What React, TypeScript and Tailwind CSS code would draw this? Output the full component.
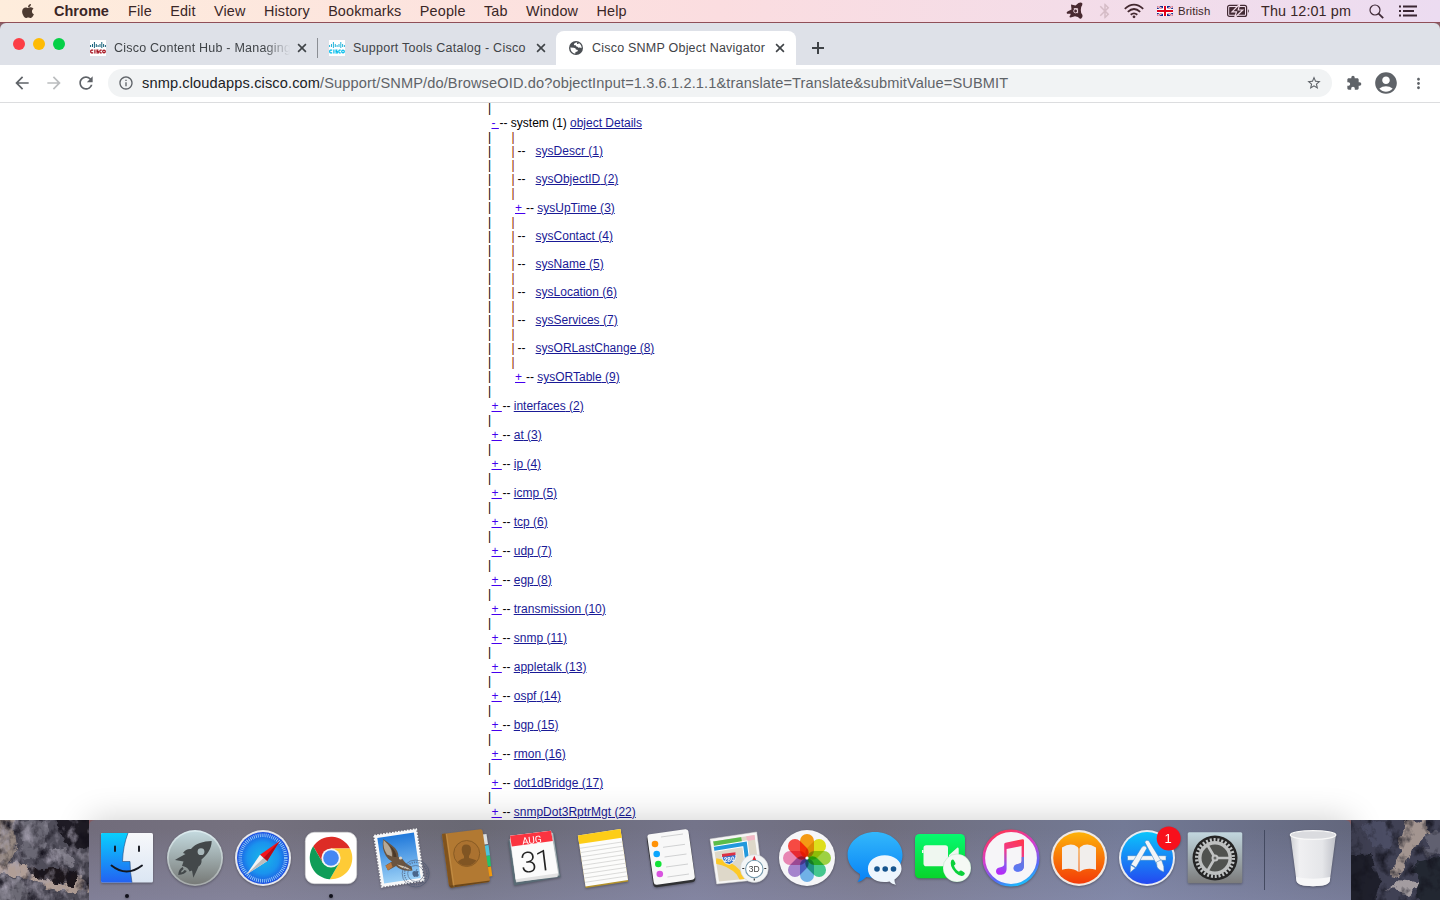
import React from "react";
import { FaApple } from "react-icons/fa";
import {
  MdAccountCircle,
  MdArrowBack,
  MdArrowForward,
  MdBluetooth,
  MdExtension,
  MdInfoOutline,
  MdMoreVert,
  MdRefresh,
  MdStarBorder,
} from "react-icons/md";

/* ---------- Menu bar ---------- */

function AvastIcon() {
  return (
    <svg width="18" height="18" viewBox="0 0 18 18" className="shrink-0">
      <path
        d="M5 2.5 L9.5 3.5 L12.5 1 Q15 0 16.3 1.2 Q16.8 3.5 15.2 5 L14.8 8 L15.2 11 L16.5 13 Q17 15.5 15 16.8 Q13 17 12 15 L9 14.3 L4.5 15.6 Q2.5 15 4.5 13 L4.5 11.7 L1 11.8 Q0 10.5 1.5 9.5 L5.5 7.5 Z"
        fill="#482930"
      />
      <circle cx="9.6" cy="9" r="1.9" fill="none" stroke="#f3dbe5" strokeWidth=".9" />
      <path d="M7.8 6.6 H11.6 V11.2" fill="none" stroke="#f3dbe5" strokeWidth=".9" />
    </svg>
  );
}

function WifiIcon() {
  return (
    <svg width="20" height="16" viewBox="0 0 20 16" className="shrink-0" fill="none" stroke="#43282f" strokeWidth="1.8">
      <path d="M0.8 5.8 Q10 -2.6 19.2 5.8" />
      <path d="M3.8 8.9 Q10 3.2 16.2 8.9" />
      <path d="M6.7 11.8 Q10 8.9 13.3 11.8" />
      <circle cx="10" cy="13.8" r="1.4" fill="#43282f" stroke="none" />
    </svg>
  );
}

function Flag() {
  return (
    <svg width="16" height="10" viewBox="0 0 16 10" className="shrink-0">
      <rect width="16" height="10" fill="#1b2a8c" />
      <path d="M0 0 L16 10 M16 0 L0 10" stroke="#fff" strokeWidth="2" />
      <path d="M0 0 L16 10 M16 0 L0 10" stroke="#d8203a" strokeWidth=".7" />
      <path d="M8 0 V10 M0 5 H16" stroke="#fff" strokeWidth="4" />
      <path d="M8 0 V10 M0 5 H16" stroke="#e0001b" strokeWidth="2" />
    </svg>
  );
}

function Battery() {
  return (
    <svg width="23" height="14" viewBox="0 0 23 14" className="shrink-0">
      <rect x="0.6" y="1.4" width="19" height="11" rx="2" fill="none" stroke="#432a34" strokeWidth="1.2" />
      <rect x="2.2" y="3" width="15.8" height="7.8" rx=".6" fill="#432a34" />
      <path d="M21 5 Q22.8 7 21 9 Z" fill="#432a34" />
      <path d="M12.8 0 L5 7.8 H9.5 L7.5 14 L15.8 6 H11.2 Z" fill="#432a34" stroke="#f1dae7" strokeWidth="1.2" />
    </svg>
  );
}

const menus = ["File", "Edit", "View", "History", "Bookmarks", "People", "Tab", "Window", "Help"];

function MenuBar() {
  return (
    <header className="flex h-[23px] shrink-0 items-center border-b border-[#8f4f58] bg-linear-to-r from-[#feeddc] via-[#fbdde0] to-[#ecdcf1] text-[14.4px] text-[#3a2626]">
      <FaApple className="ml-[20px] size-[16px] text-[#4c3a31]" />
      <span className="ml-[18px] w-[74px] pt-px text-[14.5px] font-bold tracking-[0.02px]">Chrome</span>
      <nav className="flex gap-[18.4px] pt-px tracking-[0.15px]">
        {menus.map((m) => (
          <span key={m}>{m}</span>
        ))}
      </nav>
      <div className="ml-auto flex items-center">
        <AvastIcon />
        <MdBluetooth className="ml-[12px] size-[18px] text-[#d5bcc6]" />
        <span className="ml-[10.5px] flex"><WifiIcon /></span>
        <span className="ml-[13px] flex"><Flag /></span>
        <span className="ml-[5px] w-[49px] pt-px text-[11.4px] tracking-[0.1px]">British</span>
        <Battery />
        <span className="ml-[11px] w-[108px] pt-px text-[14.4px] tracking-[0.1px] whitespace-nowrap">Thu 12:01 pm</span>
        <svg width="15" height="15" viewBox="0 0 15 15" fill="none" stroke="#3f2a36">
          <circle cx="6" cy="6" r="5" strokeWidth="1.2" />
          <path d="M9.6 9.6 L14.2 14.2" strokeWidth="1.8" />
        </svg>
        <svg width="18" height="12" viewBox="0 0 18 12" className="mr-[23px] ml-[15px]" stroke="#3a2633" strokeWidth="1.8">
          <path d="M0 1.5 H2 M4 1.5 H18 M0 6 H2 M4 6 H15 M0 10.5 H2 M4 10.5 H18" />
        </svg>
      </div>
    </header>
  );
}

/* ---------- Browser chrome ---------- */

function CiscoIcon({ bars, word }: { bars: string; word: string }) {
  return (
    <svg width="16" height="16" viewBox="0 0 16 16" className="shrink-0">
      <rect width="16" height="16" fill="#fff" />
      <path d="M.6 5 V7 M2.5 4 V7 M4.4 2 V8 M6.3 4 V7 M8.1 5 V7 M10 4 V7 M11.8 2 V8 M13.6 4 V7 M15.4 5 V7" stroke={bars} strokeWidth="1" />
      <g fill="none" stroke={word} strokeWidth="1.2">
        <path d="M3.2 10.2 H1.5 Q.7 10.2 .7 11.5 Q.7 12.8 1.5 12.8 H3.2" />
        <path d="M4.9 9.6 V13.4" />
        <path d="M8.4 10.1 H7 V11.5 H8.3 V12.8 H6.4" />
        <path d="M11.7 10.2 H10.5 Q9.8 10.2 9.8 11.5 Q9.8 12.8 10.5 12.8 H11.7" />
        <circle cx="14" cy="11.5" r="1.3" />
      </g>
    </svg>
  );
}

function GlobeIcon() {
  return (
    <svg width="14" height="14" viewBox="0 0 14 14" className="shrink-0">
      <circle cx="7" cy="7" r="7" fill="#4b4f54" />
      <path d="M8.2 1.3 Q5 1.7 4.8 3.4 Q5 4.4 6.7 4.3 Q7.2 5.8 8.5 5.8 L9.4 6.7 Q11.2 6.3 12.6 7.2 Q12.7 3.5 9.8 1.9 L9.4 3 H8 Z" fill="#fff" />
      <path d="M1.3 6.6 L4.8 6.8 Q7 7 6.9 8.6 L8.9 9 L8.4 10.6 L6.5 11 L6.2 12.7 Q1.7 12 1.3 6.6 Z" fill="#fff" />
    </svg>
  );
}

function CloseIcon() {
  return (
    <svg width="12" height="12" viewBox="0 0 12 12" className="shrink-0" stroke="#3f4347" strokeWidth="1.6">
      <path d="M2.1 2.1 L9.9 9.9 M9.9 2.1 L2.1 9.9" />
    </svg>
  );
}

function TabStrip() {
  return (
    <div className="flex h-[42px] shrink-0 items-end rounded-t-md bg-[#dee1e8] text-[12.5px] tracking-[0.22px] text-[#3f4347]">
      <div className="flex h-[42px] w-[77px] items-center gap-2 pl-[13px]">
        <i className="size-3 rounded-full bg-[#fc3e46]" />
        <i className="size-3 rounded-full bg-[#febb04]" />
        <i className="size-3 rounded-full bg-[#05d047]" />
      </div>
      <div className="flex h-[34px] w-[240px] items-center pl-[13px]">
        <CiscoIcon bars="#15617a" word="#a30c18" />
        <span className="ml-2 w-[176px] overflow-hidden mask-r-from-85% mask-r-to-100% whitespace-nowrap">Cisco Content Hub - Managing</span>
        <span className="ml-[6px] flex"><CloseIcon /></span>
      </div>
      <div className="flex h-[34px] w-[239px] items-center">
        <i className="h-5 w-px bg-[#8b8e94]" />
        <span className="ml-[11px] flex"><CiscoIcon bars="#26b5da" word="#00bceb" /></span>
        <span className="ml-2 w-[182px] tracking-[0.26px] whitespace-nowrap">Support Tools Catalog - Cisco</span>
        <CloseIcon />
      </div>
      <div className="flex h-[34px] w-[240px] items-center rounded-t-lg bg-white pl-[13px]">
        <GlobeIcon />
        <span className="ml-[9px] w-[182px] whitespace-nowrap">Cisco SNMP Object Navigator</span>
        <CloseIcon />
      </div>
      <div className="flex h-[34px] items-center pl-4">
        <svg width="12" height="12" viewBox="0 0 12 12" stroke="#3f4347" strokeWidth="2">
          <path d="M6 0 V12 M0 6 H12" />
        </svg>
      </div>
    </div>
  );
}

function Toolbar() {
  return (
    <div className="flex h-[38px] shrink-0 items-center border-b border-[#dcdddf] bg-white pb-px text-[#5f6368]">
      <MdArrowBack className="ml-[12px] size-5" />
      <MdArrowForward className="ml-[12px] size-5 text-[#bbbdbf]" />
      <MdRefresh className="ml-[12px] size-5" />
      <div className="ml-3 flex h-7 w-[1224px] items-center rounded-full bg-[#f1f3f4] pl-[10px]">
        <MdInfoOutline className="size-4" />
        <span className="ml-[8px] pt-[2px] text-[14.6px] tracking-[0.12px] whitespace-nowrap">
          <span className="text-[#202124]">snmp.cloudapps.cisco.com</span>
          /Support/SNMP/do/BrowseOID.do?objectInput=1.3.6.1.2.1.1&amp;translate=Translate&amp;submitValue=SUBMIT
        </span>
        <MdStarBorder className="mr-[10px] ml-auto size-4" />
      </div>
      <MdExtension className="ml-[14px] size-4" />
      <MdAccountCircle className="ml-[11px] size-[26px]" />
      <MdMoreVert className="ml-[11px] size-[17px]" />
    </div>
  );
}

/* ---------- OID tree ---------- */

type Child = { name: string; id: number; open?: boolean };

const systemChildren: Child[] = [
  { name: "sysDescr", id: 1 },
  { name: "sysObjectID", id: 2 },
  { name: "sysUpTime", id: 3, open: true },
  { name: "sysContact", id: 4 },
  { name: "sysName", id: 5 },
  { name: "sysLocation", id: 6 },
  { name: "sysServices", id: 7 },
  { name: "sysORLastChange", id: 8 },
  { name: "sysORTable", id: 9, open: true },
];

const groups: [string, number][] = [
  ["interfaces", 2],
  ["at", 3],
  ["ip", 4],
  ["icmp", 5],
  ["tcp", 6],
  ["udp", 7],
  ["egp", 8],
  ["transmission", 10],
  ["snmp", 11],
  ["appletalk", 13],
  ["ospf", 14],
  ["bgp", 15],
  ["rmon", 16],
  ["dot1dBridge", 17],
  ["snmpDot3RptrMgt", 22],
];

function Bar({ inner = false }: { inner?: boolean }) {
  return <span className={inner ? "ml-[20.6px] w-[3px] text-[#8f2000]" : "w-[3px] text-black"}>|</span>;
}

function Sign({ children }: { children: string }) {
  return <a className="w-[10.9px] whitespace-pre text-[#4400ee] underline">{children + " "}</a>;
}

function Link({ children }: { children: React.ReactNode }) {
  return <a className="text-[#1a1a96] underline">{children}</a>;
}

function Tree() {
  return (
    <main className="flex h-[717px] shrink-0 flex-col overflow-hidden bg-white pl-[488px] text-[12px] leading-[14px] whitespace-pre text-black">
      <div className="flex h-[12px] shrink-0 leading-[10px]"><Bar /></div>
      <div className="flex h-[15px] shrink-0 pt-px pl-[3.5px]">
        <a className="w-[8px] text-[#4400ee] underline">{"- "}</a>
        <span className="w-[70.5px]">-- system (1) </span>
        <Link>object Details</Link>
      </div>
      {systemChildren.map((c) => (
        <React.Fragment key={c.id}>
          <div className="flex h-[14px] shrink-0"><Bar /><Bar inner /></div>
          {c.open ? (
            <div className="flex h-[15px] shrink-0">
              <Bar />
              <span className="flex pt-px pl-[24px]">
                <Sign>+</Sign>
                <span>-- </span>
                <Link>{c.name} ({c.id})</Link>
              </span>
            </div>
          ) : (
            <div className="flex h-[14px] shrink-0">
              <Bar />
              <Bar inner />
              <span className="ml-[3px] w-[18px]">--</span>
              <Link>{c.name} ({c.id})</Link>
            </div>
          )}
        </React.Fragment>
      ))}
      {groups.map(([name, id]) => (
        <React.Fragment key={id}>
          <div className="flex h-[14px] shrink-0"><Bar /></div>
          <div className="flex h-[15px] shrink-0 pt-px pl-[3.5px]">
            <Sign>+</Sign>
            <span>-- </span>
            <Link>{name} ({id})</Link>
          </div>
        </React.Fragment>
      ))}
    </main>
  );
}

/* ---------- Dock icons, each drawn in a 68x80 slot ---------- */

function Finder() {
  return (
    <>
      <defs>
        <linearGradient id="fb" x2="0" y2="1"><stop stopColor="#09d0fd" /><stop offset="1" stopColor="#2362f2" /></linearGradient>
        <linearGradient id="fw" x2="0" y2="1"><stop stopColor="#f7f8fb" /><stop offset="1" stopColor="#dbe6f3" /></linearGradient>
      </defs>
      <rect x="8" y="13" width="52" height="49.5" rx="1.5" fill="url(#fw)" />
      <path d="M9.5 13 H35 Q30 26 29.5 41.5 H37 Q37 52 39 62.5 H9.5 Q8 62.5 8 61 V14.5 Q8 13 9.5 13 Z" fill="url(#fb)" />
      <path d="M35 13 Q30 26 29.5 41.5 H37 Q37 52 39 62.5" fill="none" stroke="#22487a" strokeWidth=".6" />
      <path d="M22 26.5 V31 M46 26.5 V31 M18.5 45.5 Q33.5 57.5 49 45.5" fill="none" stroke="#14171f" strokeWidth="1.9" strokeLinecap="round" />
    </>
  );
}

function Launchpad() {
  return (
    <>
      <defs>
        <linearGradient id="lp" x2="0" y2="1"><stop stopColor="#c3d9de" /><stop offset="1" stopColor="#777a77" /></linearGradient>
        <linearGradient id="lr" x2="0" y2="1"><stop stopColor="#dcecf0" /><stop offset="1" stopColor="#a5a9a9" /></linearGradient>
      </defs>
      <circle cx="34" cy="38" r="28" fill="url(#lr)" />
      <circle cx="34" cy="38" r="26.3" fill="url(#lp)" />
      <path d="M50.7 21 C42 21.5 35 23 30 29 C27 28.5 24 30 22 33 L24.5 34 C21 36 17 38 14 40 L22.5 41.5 L21 46 C25 46.5 28 49 28.5 51.5 L31 50.5 L32.3 57.7 L36 50 L37.5 46.5 C39.5 45.5 41 43 40.5 39.5 C46 35 50.5 29 50.7 21 Z" fill="#43484a" />
      <path d="M21.7 47 Q17.5 49 17.2 55 Q24 54.5 25.8 51 L23.5 50 Q22 52.5 19.8 52.6 Q20 50.5 22.6 49 Z" fill="#43484a" />
      <circle cx="40" cy="31.7" r="3.4" fill="#a8b7ba" />
    </>
  );
}

function Safari() {
  return (
    <>
      <defs>
        <radialGradient id="sf"><stop stopColor="#18b7e8" /><stop offset=".6" stopColor="#1a93ee" /><stop offset="1" stopColor="#1e50e0" /></radialGradient>
      </defs>
      <circle cx="34" cy="38" r="28" fill="#e7e8ec" />
      <circle cx="34" cy="38" r="26" fill="url(#sf)" />
      <circle cx="34" cy="38" r="22.8" fill="none" stroke="#9fd2fb" strokeWidth="3.6" strokeDasharray=".8 1.19" />
      <path d="M50.5 21.3 L31 34.7 L38 41.2 Z" fill="#f4151b" />
      <path d="M50.5 21.3 L34.5 38 L38 41.2 Z" fill="#b50d17" />
      <path d="M17.5 54.5 L31 34.7 L38 41.2 Z" fill="#f3f3f3" />
      <path d="M17.5 54.5 L34.5 38 L38 41.2 Z" fill="#bdbdbd" />
    </>
  );
}

function ChromeLogo() {
  return (
    <>
      <rect x="8.3" y="12.3" width="51.4" height="51.4" rx="9" fill="#fff" stroke="#d5d5d8" strokeWidth=".7" />
      <path d="M16.2 26.35 A21.3 21.3 0 0 1 53 28.4 H34 L25.7 42.8 Z" fill="#dd2c26" />
      <path d="M53 28.4 A21.3 21.3 0 0 1 32.8 59.25 L42.3 42.8 L34 28.4 Z" fill="#fecb36" />
      <path d="M32.8 59.25 A21.3 21.3 0 0 1 16.2 26.35 L25.7 42.8 H42.3 Z" fill="#0f9d58" />
      <circle cx="34" cy="38" r="9.6" fill="#f5f5f5" />
      <circle cx="34" cy="38" r="7.8" fill="#4587f3" />
    </>
  );
}

function Mail() {
  return (
    <>
      <defs>
        <linearGradient id="ml" x2="0" y2="1"><stop stopColor="#1f78da" /><stop offset="1" stopColor="#9bd0f6" /></linearGradient>
      </defs>
      <g transform="rotate(-8.5 34 38)">
        <rect x="12.8" y="12.2" width="42.4" height="51.6" fill="#f8f8f8" stroke="#f8f8f8" strokeWidth="2" strokeDasharray="1.7 1.3" />
        <rect x="15.5" y="15" width="37" height="46" fill="url(#ml)" />
      </g>
      <path d="M18.3 19 Q16.2 28 21 36 Q23.5 40 27 41.5 L20.5 45.5 L23 50.5 L31 46 Q37 52 47.5 50.5 L46.5 46.5 Q40 43.5 37.5 39 L33.5 37 Q33.5 30 26.5 25 Q23 22.5 18.3 19 Z" fill="#6a543f" />
      <path d="M18.6 20 Q17.5 28 22 34.5 L27 36.5 Q27.5 29.5 22.5 24 Z" fill="#b5a897" />
      <path d="M24 25 Q31 30 31.5 37 L28.5 37 Q28 30 24 25 Z" fill="#4a3929" />
      <path d="M20.5 45.7 L26 42.5 L27.5 47 L23 50.3 Z" fill="#b9793f" />
      <path d="M32 44.5 Q38 49.5 46 49.8 L41 46.7 Z" fill="#d6c6ae" />
      <circle cx="35.5" cy="38" r="1.6" fill="#ddd4c6" />
      <g fill="none" stroke="#4b5772" opacity=".65">
        <circle cx="50.7" cy="53.5" r="13.5" strokeWidth=".9" />
        <circle cx="50.7" cy="53.5" r="11.2" strokeWidth="1.5" strokeDasharray="1.2 1.1" />
        <circle cx="50.7" cy="53.5" r="8" strokeWidth=".9" />
      </g>
      <g transform="translate(46.2 48.5)" opacity=".75"><FaApple size={9} color="#344768" /></g>
    </>
  );
}

function Contacts() {
  return (
    <>
      <path d="M49 14.5 L53.5 14 L55 24 L49 25 Z" fill="#dce0e2" />
      <path d="M50 26 L55.5 25 L57 35.5 L51 36 Z" fill="#4fc3dc" />
      <path d="M51 36.5 L57 35.5 L58 46 L52 47 Z" fill="#22c46b" />
      <path d="M52 47.5 L58 46.5 L59.3 56 L54 57 Z" fill="#f0990e" />
      <path d="M9 14 L47.5 9.2 Q49.3 9.2 49.6 11 L57 60.5 L55.5 62 L18 67.6 L16 65.5 Z" fill="#b27932" />
      <path d="M9 14 L12.5 13.5 L20 67.2 L18 67.6 L16 65.5 Z" fill="#80531d" />
      <path d="M16 65.7 L57 60.5 L55.5 62 L18 67.8 Z" fill="#6c4719" />
      <path d="M13.5 14 L21 66.5" stroke="#ca964e" strokeWidth=".7" />
      <circle cx="33.7" cy="33.5" r="13" fill="#ab7230" stroke="#835822" strokeWidth=".9" />
      <path d="M24.8 42 Q26 40 31 38.3 V36 Q28.7 34 28.7 29.5 Q28.8 24.5 33 24.5 Q38 24.5 38 29.5 Q38 34 36 36 V38 Q41 39 43.5 40.5 Q39 46 33.5 45.8 Q28 45.5 24.8 42 Z" fill="#805523" />
    </>
  );
}

function Calendar() {
  return (
    <>
      <path d="M7.3 20.7 L53 12.7 L59.7 57 L13 65.5 Z" fill="#596b75" />
      <path d="M8.5 19 L52 12.7 L58.5 55.5 L15 62.5 Z" fill="#b1b9bd" />
      <path d="M9 15.7 L50 10.7 L57 53.3 L56.5 57 L15.5 62 L14.7 59.3 Z" fill="#e2e2e2" />
      <path d="M9 15.7 L50 10.7 L57 53.3 L14.7 59.3 Z" fill="#fbfbfb" />
      <path d="M9 15.7 L50 10.7 L51.8 21 L10.8 26.5 Z" fill="#fb3440" />
      <g transform="rotate(-7 34 38)" textAnchor="middle" fontFamily="Roboto, sans-serif">
        <text x="33" y="23.3" fontSize="10" fill="#fff">AUG</text>
        <text x="34" y="51.5" fontSize="29" fontWeight="300" letterSpacing="-1" fill="#242424">31</text>
      </g>
    </>
  );
}

function Notes() {
  return (
    <g transform="rotate(-8.5 34 38)">
      <rect x="12.5" y="12.5" width="43" height="52.5" fill="#b2912b" />
      <rect x="12.5" y="12" width="43" height="51.5" fill="#fcfcfb" />
      <rect x="12.5" y="12" width="43" height="8.7" fill="#fdcd17" />
      <path d="M12.5 25 H55.5 M12.5 29.3 H55.5 M12.5 33.6 H55.5 M12.5 37.9 H55.5 M12.5 42.2 H55.5 M12.5 46.5 H55.5 M12.5 50.8 H55.5 M12.5 55.1 H55.5 M12.5 59.4 H55.5" stroke="#cecfcd" strokeWidth=".7" />
    </g>
  );
}

function Reminders() {
  return (
    <>
      <g transform="rotate(-8 34 38)">
        <rect x="12.7" y="13" width="42.5" height="52" rx="3.5" fill="#303134" />
        <rect x="13.5" y="11.5" width="41.5" height="51" rx="3" fill="#f8f8f8" />
      </g>
      <path d="M24 17 L46 14 M26 27.3 L48 24.3 M27.5 37 L49.5 34 M29 47 L51 44 M30.5 57 L52 54" stroke="#bfc0c1" strokeWidth=".7" />
      <circle cx="18" cy="24" r="3.3" fill="#ff9208" />
      <circle cx="19.7" cy="34" r="3.3" fill="#0aa5fd" />
      <circle cx="21.3" cy="44" r="3.3" fill="#13e337" />
      <circle cx="22.8" cy="54" r="3.3" fill="#d954e0" />
    </>
  );
}

function Maps() {
  return (
    <>
      <defs><clipPath id="mc"><path d="M8 21.5 L49.5 15 L55 57.5 L14 61.5 Z" /></clipPath></defs>
      <path d="M5 19 L51.7 12 L57.7 59.3 L11.7 64 Z" fill="#f6f6f5" stroke="#d8d8d8" strokeWidth=".5" />
      <g clipPath="url(#mc)">
        <rect width="68" height="80" fill="#ded8c9" />
        <path d="M8 21 L36 16 L37 22 L9 26.5 Z" fill="#5bbd4b" />
        <path d="M41 15 L50 13.5 L51 19.5 L42 21 Z" fill="#f2b7c5" />
        <path d="M8 29 L40 23.8 L44 55" fill="none" stroke="#fff" strokeWidth="6" />
        <path d="M8 29 L40 23.8 L44 55" fill="none" stroke="#2299dc" strokeWidth="4" />
        <path d="M11 41 Q25 43 34 53 L39 62" fill="none" stroke="#fdc928" strokeWidth="5.5" />
      </g>
      <path d="M17 35 L30.5 33 Q32.5 41 24.5 44.5 Q17 43.5 17 35 Z" fill="#3474cf" stroke="#fff" strokeWidth=".8" />
      <path d="M17 34 L30.5 32.3 V35 L17 37 Z" fill="#dc3144" />
      <text x="24.2" y="41.5" fontSize="6.5" fontWeight="700" fill="#fff" textAnchor="middle" transform="rotate(-6 24 40)">280</text>
      <circle cx="49.3" cy="48.5" r="14" fill="#f3f5f6" stroke="#c8cbcd" strokeWidth=".5" />
      <circle cx="49.3" cy="49" r="8.7" fill="#fff" stroke="#7499ad" strokeWidth="1.1" />
      <path d="M49.3 35.8 L51.2 40 H47.4 Z" fill="#de2532" />
      <path d="M37.3 48.5 H39.3 M59.3 48.5 H61.3 M49.3 58.5 V60.5" stroke="#333" strokeWidth="1.2" />
      <text x="49.3" y="52" fontSize="8.5" fill="#444" textAnchor="middle">3D</text>
    </>
  );
}

const petals = ["#fda014", "#e6e61c", "#a3d944", "#48cf92", "#74b8ee", "#ab88d2", "#f08bb8", "#ff4d45"];

function Photos() {
  return (
    <>
      <circle cx="34" cy="38" r="28" fill="#f6f6f8" />
      {petals.map((c, i) => (
        <rect key={c} x="27" y="14" width="14" height="23.5" rx="7" fill={c} className="mix-blend-multiply" transform={`rotate(${i * 45} 34 38)`} />
      ))}
      <circle cx="34" cy="38" r="1.6" fill="#fff" />
    </>
  );
}

function Messages() {
  return (
    <>
      <defs><linearGradient id="ms" x2="0" y2="1"><stop stopColor="#33b8fb" /><stop offset="1" stopColor="#0782f6" /></linearGradient></defs>
      <path d="M34 12 C49 12 61.5 22 61.5 35 C61.5 48 49 58 34 58 C31 58 28 57.6 25.3 56.9 C22 60 19.5 61.5 16.5 61.8 C18.5 59.5 19.5 57 19 54 C11.5 50 6.6 43 6.6 35 C6.6 22 19 12 34 12 Z" fill="url(#ms)" />
      <path d="M43.7 35.2 C53 35.2 60.5 40.8 60.5 48.5 C60.5 53 57.5 57 53.5 59.5 C53.4 61.5 54 63.5 55 64.7 C52.4 64.4 50 63.3 48.6 61.5 C35 64 26.9 57 26.9 48.7 C26.9 41 34.4 35.2 43.7 35.2 Z" fill="#eef6fd" />
      <g fill="#16548e"><circle cx="36" cy="49" r="2.8" /><circle cx="44.2" cy="49" r="2.8" /><circle cx="52.5" cy="49" r="2.8" /></g>
    </>
  );
}

function FaceTime() {
  return (
    <>
      <defs><linearGradient id="ft" x2="0" y2="1"><stop stopColor="#06fa70" /><stop offset="1" stopColor="#08d42b" /></linearGradient></defs>
      <rect x="6" y="14" width="50" height="44.3" rx="4.5" fill="url(#ft)" />
      <rect x="14.5" y="25.2" width="24.5" height="21" rx="2.8" fill="#eff7f0" />
      <path d="M40 35 L48.5 27.5 Q49.7 27 49.7 29 V45 L40 38 Z M13 30 H14.5 V33 H13 Z" fill="#eff7f0" />
      <circle cx="48" cy="48" r="14" fill="#f5f9f5" stroke="#0cae3c" strokeOpacity=".25" strokeWidth=".6" />
      <path d="M42.2 40.5 Q44 38.7 45 40.5 L46.5 43.3 Q46.8 44.6 45 45.6 Q46 49.5 50 51.8 Q51.3 50 52.8 50.8 L55.3 52.5 Q56.8 53.8 54.8 55.3 Q51.5 57.3 46.5 52.7 Q40 46 42.2 40.5 Z" fill="#0bd13b" />
    </>
  );
}

function ITunes() {
  return (
    <>
      <defs>
        <linearGradient id="ir" x1=".3" y1="0" x2=".7" y2="1"><stop stopColor="#ff3657" /><stop offset=".4" stopColor="#d53dcf" /><stop offset=".75" stopColor="#5a67f7" /><stop offset="1" stopColor="#17c1fb" /></linearGradient>
        <linearGradient id="in" x1=".7" y1="0" x2=".3" y2="1"><stop stopColor="#ff3853" /><stop offset=".4" stopColor="#ee3a8f" /><stop offset=".75" stopColor="#8a55f2" /><stop offset="1" stopColor="#b52bf7" /></linearGradient>
      </defs>
      <circle cx="34" cy="38" r="27.2" fill="#f6f5f8" stroke="url(#ir)" strokeWidth="2.6" />
      <path d="M27.2 24.3 Q27.2 23 28.5 22.7 L45.5 19.2 Q47 19 47 20.4 V46 Q47 50.8 42 51.6 Q36.5 52 36.6 48 Q36.8 44.6 41 44 Q44.6 43.4 44.6 41 V26 L29.6 29 V49 Q29.6 54 24.4 54.8 Q19 55.2 19 51.2 Q19 47.8 23.5 47.2 Q27.2 46.6 27.2 44 Z" fill="url(#in)" />
      <path d="M44.6 37 H47 V46 Q47 50.8 42 51.6 Q36.5 52 36.6 48 Q36.8 44.6 41 44 Q44.6 43.4 44.6 41 Z" fill="#4b83f4" opacity=".8" />
    </>
  );
}

function IBooks() {
  return (
    <>
      <defs><linearGradient id="ib" x2="0" y2="1"><stop stopColor="#fdb208" /><stop offset="1" stopColor="#f33a08" /></linearGradient></defs>
      <circle cx="34" cy="38" r="28" fill="#efe9e4" />
      <circle cx="34" cy="38" r="25.8" fill="url(#ib)" />
      <path d="M17 27.5 Q26 22 32.6 27 Q33.5 27.8 33.5 29 V52 Q27 47 17 49.7 Z M51 27.5 Q42 22 35.4 27 Q34.5 27.8 34.5 29 V52 Q41 47 51 49.7 Z" fill="#f1eeec" />
    </>
  );
}

function AppStore() {
  return (
    <>
      <defs><linearGradient id="as" x2="0" y2="1"><stop stopColor="#0bc4fb" /><stop offset="1" stopColor="#2448f0" /></linearGradient></defs>
      <circle cx="34" cy="38" r="28" fill="#e9ebf0" />
      <circle cx="34" cy="38" r="26" fill="url(#as)" />
      <g fill="#f3f5f7" stroke="#317fc5" strokeWidth=".5">
        <rect x="14.5" y="35.7" width="38.5" height="4.6" rx=".6" />
        <path d="M31.7 22 Q33.3 19.2 35.8 20.7 L49.5 43 L44.5 46 Z" />
        <path d="M28.5 27.5 Q30.8 24.5 33.5 27 L33.7 28.5 L23 47.5 L18 44.5 Z" />
        <path d="M17.5 45 L22.5 48 L17.2 52.5 Z" />
        <path d="M43.5 42 L48.5 39.8 L50.8 46.5 L51 52 Q45.5 50 44 47 Z" />
      </g>
      <circle cx="55.7" cy="18.5" r="12" fill="#f8101c" />
      <text x="55.2" y="23" fontSize="13" fill="#fff" textAnchor="middle">1</text>
    </>
  );
}

function Preferences() {
  return (
    <>
      <defs><linearGradient id="pr" x2="0" y2="1"><stop stopColor="#c2d7df" /><stop offset="1" stopColor="#7b7b7b" /></linearGradient></defs>
      <rect x="6.7" y="12.3" width="54.6" height="51" rx="1.5" fill="url(#pr)" />
      <circle cx="34" cy="38" r="22.5" fill="#242424" />
      <circle cx="34" cy="38" r="18.3" fill="none" stroke="#c0c3c4" strokeWidth="3.4" strokeDasharray="2 1.83" />
      <circle cx="34" cy="38" r="15.2" fill="#50524f" stroke="#bec0c0" strokeWidth="3.4" />
      <path d="M34 38 H48 M34 38 L26.7 25.5 M34 38 L26.7 50.5" stroke="#c0c2c2" strokeWidth="2.6" />
      <circle cx="34" cy="38" r="3.5" fill="#c2c3c3" />
      <circle cx="34" cy="38" r="1.5" fill="#676967" />
    </>
  );
}

function Trash() {
  return (
    <>
      <defs><linearGradient id="tr"><stop stopColor="#cfd0d4" /><stop offset=".2" stopColor="#f0f0f2" /><stop offset=".7" stopColor="#e5e6e9" /><stop offset="1" stopColor="#bfc1c8" /></linearGradient></defs>
      <path d="M11.3 14 L17.5 61 Q19 66.2 34 66.2 Q49.5 66.2 50.8 61 L57 14 Z" fill="url(#tr)" />
      <path d="M17 57 Q34 60.5 51.2 57 L50.8 61 Q49 66.2 34 66.2 Q19 66.2 17.5 61 Z" fill="#f7f7f8" />
      <ellipse cx="34.1" cy="15" rx="22.8" ry="4.3" fill="#dadbdf" stroke="#f8f8f8" strokeWidth="1.2" />
    </>
  );
}

const apps: [React.ComponentType, boolean][] = [
  [Finder, true],
  [Launchpad, false],
  [Safari, false],
  [ChromeLogo, true],
  [Mail, false],
  [Contacts, false],
  [Calendar, false],
  [Notes, false],
  [Reminders, false],
  [Maps, false],
  [Photos, false],
  [Messages, false],
  [FaceTime, false],
  [ITunes, false],
  [IBooks, false],
  [AppStore, false],
  [Preferences, false],
];

function Slot({ children, running = false }: { children: React.ReactNode; running?: boolean }) {
  return (
    <svg width="68" height="80" viewBox="0 0 68 80" className="shrink-0 overflow-visible drop-shadow-[0_1px_1px_rgba(0,0,0,0.3)]">
      {children}
      {running && <circle cx="34" cy="76" r="2" fill="#10101a" />}
    </svg>
  );
}

function RockLeft() {
  return (
    <svg width="89" height="80" viewBox="0 0 89 80" className="shrink-0">
      <defs>
        <filter id="rough" x="0" y="0" width="1" height="1" colorInterpolationFilters="sRGB">
          <feTurbulence type="fractalNoise" baseFrequency=".09 .07" numOctaves="4" seed="8" result="n" />
          <feDisplacementMap in="SourceGraphic" in2="n" scale="14" xChannelSelector="R" yChannelSelector="G" result="d" />
          <feColorMatrix in="n" values="0 0 0 0 0.08  0 0 0 0 0.07  0 0 0 0 0.11  2.6 0 0 0 -1.2" result="k" />
          <feColorMatrix in="n" values="0 0 0 0 0.66  0 0 0 0 0.64  0 0 0 0 0.7  0 2.4 0 0 -1.15" result="w" />
          <feMerge><feMergeNode in="d" /><feMergeNode in="k" /><feMergeNode in="w" /></feMerge>
        </filter>
      </defs>
      <rect width="89" height="80" fill="#35333c" />
      <g filter="url(#rough)">
        <rect x="-10" y="-10" width="109" height="100" fill="#4f4d59" />
        <path d="M-5 -5 H14 L17 28 L8 46 L-5 44 Z" fill="#948780" />
        <path d="M18 2 L40 -4 L48 12 L44 34 L22 39 Z" fill="#6a6874" />
        <path d="M57 -5 H94 V26 L72 30 L61 18 Z" fill="#1f1c25" />
        <path d="M-5 45 L22 44 L38 56 L62 64 L78 56 L94 65 V73 L58 71 L27 59 L-5 54 Z" fill="#b09e96" />
        <path d="M26 49 L52 46 L82 52 L72 63 L40 61 Z" fill="#1d171c" />
        <path d="M-5 57 L22 60 L40 86 H-5 Z" fill="#6c6a75" />
        <path d="M50 30 L66 27 L73 45 L60 46 Z" fill="#7e7b87" />
      </g>
    </svg>
  );
}

function RockRight() {
  return (
    <svg width="89" height="80" viewBox="0 0 89 80" className="shrink-0">
      <defs>
        <filter id="rough2" x="0" y="0" width="1" height="1" colorInterpolationFilters="sRGB">
          <feTurbulence type="fractalNoise" baseFrequency=".08 .07" numOctaves="4" seed="21" result="n" />
          <feDisplacementMap in="SourceGraphic" in2="n" scale="14" xChannelSelector="R" yChannelSelector="G" result="d" />
          <feColorMatrix in="n" values="0 0 0 0 0.08  0 0 0 0 0.08  0 0 0 0 0.12  2.4 0 0 0 -1.15" result="k" />
          <feMerge><feMergeNode in="d" /><feMergeNode in="k" /></feMerge>
        </filter>
      </defs>
      <rect width="89" height="80" fill="#2d2d38" />
      <g filter="url(#rough2)">
        <rect x="-10" y="-10" width="109" height="100" fill="#404154" />
        <path d="M55 2 L76 -5 L80 12 L66 24 L55 43 L48 57 L40 55 L48 33 L51 16 Z" fill="#a39590" />
        <path d="M36 70 L47 61 L70 64 L58 73 Z" fill="#a39ca0" />
        <path d="M-5 38 L18 34 L28 58 L24 86 H-5 Z" fill="#1f202c" />
        <path d="M10 5 L34 0 L45 16 L38 32 L20 24 Z" fill="#4b4d64" />
        <path d="M64 42 L94 35 V86 L68 82 Z" fill="#222731" />
        <path d="M72 15 L94 10 V32 L76 35 Z" fill="#606070" />
      </g>
    </svg>
  );
}

function Dock() {
  return (
    <footer className="flex h-20 shrink-0">
      <RockLeft />
      <div className="relative z-10 flex w-[1262px] rounded-t-md bg-[linear-gradient(to_bottom,rgba(160,165,205,0)_10%,rgba(160,165,205,0.35)_100%),linear-gradient(to_right,#716c7b,#75717f_12%,#696873_30%,#74748a_48%,#6f6d7c_62%,#737a96_82%,#63677d)] px-1 shadow-[0_0_34px_rgba(0,0,0,0.2)]">
        <div className="flex">
          {apps.map(([Icon, running], i) => (
            <Slot key={i} running={running}><Icon /></Slot>
          ))}
        </div>
        <div className="flex w-[30px] items-center justify-center">
          <i className="h-[60px] w-px bg-[#444a61]" />
        </div>
        <Slot><Trash /></Slot>
      </div>
      <RockRight />
    </footer>
  );
}

export default function App() {
  return (
    <div className="flex h-[900px] w-[1440px] flex-col overflow-hidden bg-[#886068] font-['Liberation_Sans',Arial,sans-serif]">
      <MenuBar />
      <TabStrip />
      <Toolbar />
      <Tree />
      <Dock />
    </div>
  );
}
